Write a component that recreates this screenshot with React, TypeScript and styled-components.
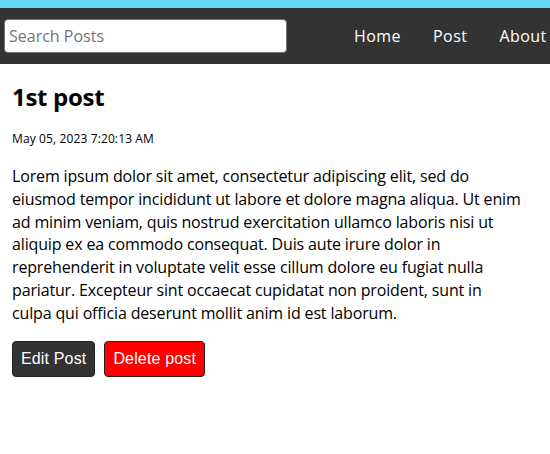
import React from "react";
import styled, { createGlobalStyle } from "styled-components";

const GlobalStyle = createGlobalStyle`
  * { box-sizing: border-box; }
  html, body { margin: 0; padding: 0; background: #fff; overflow-x: hidden; }
  body { font-family: "Open Sans", sans-serif; color: #000; }
`;

const Page = styled.div`
  width: 100%;
  min-height: 454px;
  display: flex;
  flex-direction: column;
`;

const TopBand = styled.header`
  height: 8px;
  background-color: #66d8f5;
`;

const Nav = styled.nav`
  height: 56px;
  background-color: #333;
  display: flex;
  align-items: center;
  overflow: hidden;
`;

const SearchForm = styled.form`
  padding-left: 4px;
  flex-shrink: 0;
`;

const SearchInput = styled.input`
  width: 283px;
  height: 34px;
  font-family: "Open Sans", sans-serif;
  font-size: 16px;
  padding: 0 4px;
  border: 1px solid #767676;
  border-radius: 4px;
  outline: none;
  color: #000;
  &::placeholder { color: #757575; }
`;

const LinkList = styled.ul`
  list-style: none;
  margin: 0 0 0 51px;
  padding: 0;
  display: flex;
  flex-shrink: 0;
  color: #fff;
`;

const LinkItem = styled.li`
  padding: 0 16px;
  font-size: 16px;
  line-height: 22px;
  letter-spacing: 0.45px;
`;

const NavLink = styled.a`
  color: #fff;
  text-decoration: none;
`;

const Main = styled.main`
  padding: 0 29px 0 12px;
`;

const Title = styled.h2`
  margin: 16px 0 0;
  font-size: 24px;
  font-weight: 700;
  line-height: 33px;
  letter-spacing: -0.3px;
`;

const PostDate = styled.p`
  margin: 18px 0 0;
  font-size: 12px;
  line-height: 16px;
  letter-spacing: 0.12px;
`;

const Body = styled.p`
  margin: 18px 0 0;
  font-size: 16px;
  line-height: 22.8px;
  letter-spacing: -0.15px;
`;

const Actions = styled.div`
  display: flex;
  gap: 9px;
  margin-top: 16px;
`;

const Button = styled.button<{ $danger?: boolean }>`
  font-family: "Liberation Sans", Arial, sans-serif;
  font-size: 16px;
  line-height: 18px;
  letter-spacing: 0.15px;
  padding: 8px 8px;
  border: 1px solid #222;
  border-radius: 4px;
  color: #fff;
  background-color: ${(p) => (p.$danger ? "#ff0000" : "#333")};
  cursor: pointer;
`;

export default function App() {
  return (
    <>
      <GlobalStyle />
      <Page>
        <TopBand />
        <Nav>
          <SearchForm onSubmit={(e) => e.preventDefault()}>
            <SearchInput type="text" placeholder="Search Posts" />
          </SearchForm>
          <LinkList>
            <LinkItem><NavLink href="#">Home</NavLink></LinkItem>
            <LinkItem><NavLink href="#">Post</NavLink></LinkItem>
            <LinkItem><NavLink href="#">About</NavLink></LinkItem>
          </LinkList>
        </Nav>
        <Main>
          <Title>1st post</Title>
          <PostDate>May 05, 2023 7:20:13 AM</PostDate>
          <Body>
            Lorem ipsum dolor sit amet, consectetur adipiscing elit, sed do eiusmod tempor incididunt ut labore et dolore magna aliqua. Ut enim ad minim veniam, quis nostrud exercitation ullamco laboris nisi ut aliquip ex ea commodo consequat. Duis aute irure dolor in reprehenderit in voluptate velit esse cillum dolore eu fugiat nulla pariatur. Excepteur sint occaecat cupidatat non proident, sunt in culpa qui officia deserunt mollit anim id est laborum.
          </Body>
          <Actions>
            <Button>Edit Post</Button>
            <Button $danger>Delete post</Button>
          </Actions>
        </Main>
      </Page>
    </>
  );
}
